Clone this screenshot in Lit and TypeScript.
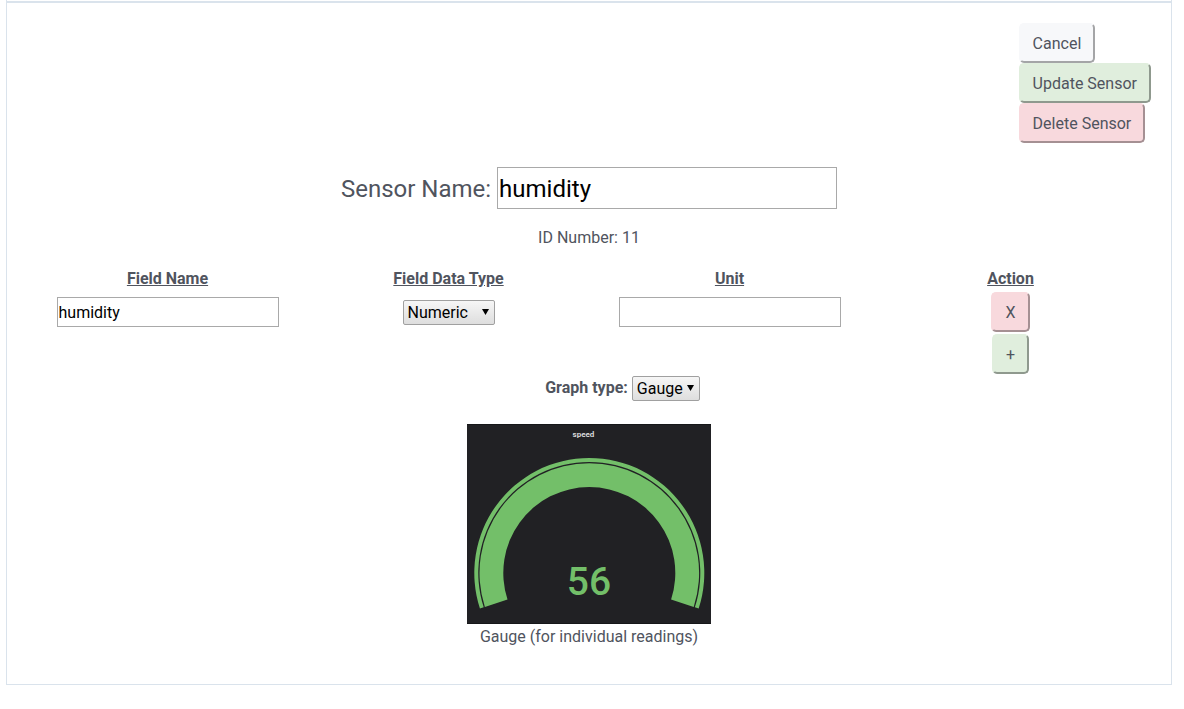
import { LitElement, html, svg, css } from "lit";
import { customElement, property, state } from "lit/decorators.js";

const toRadians = (degrees: number) => (degrees * Math.PI) / 180;

/** Ring segment that opens downwards, ending `dip` degrees below the horizontal. */
function arcBand(cx: number, cy: number, outer: number, inner: number, dip = 18) {
  const dx = Math.cos(toRadians(dip));
  const dy = Math.sin(toRadians(dip));
  return [
    `M${cx - outer * dx} ${cy + outer * dy}`,
    `A${outer} ${outer} 0 1 1 ${cx + outer * dx} ${cy + outer * dy}`,
    `L${cx + inner * dx} ${cy + inner * dy}`,
    `A${inner} ${inner} 0 1 0 ${cx - inner * dx} ${cy + inner * dy}`,
    "Z",
  ].join(" ");
}

@customElement("gauge-preview")
export class GaugePreview extends LitElement {
  @property() name = "";
  @property({ type: Number }) value = 0;

  static styles = css`
    :host {
      display: block;
    }
    .gauge {
      display: block;
      width: 244px;
      height: 200px;
      font-family: Roboto, "Liberation Sans", sans-serif;
      font-weight: 500;
      text-anchor: middle;
    }
    .back {
      fill: #212124;
    }
    .edge {
      fill: #161719;
    }
    .band,
    .value {
      fill: #73bf69;
    }
    .name {
      fill: #d8d9da;
      font-size: 8px;
      font-weight: 700;
    }
    .value {
      font-size: 39px;
    }
  `;

  render() {
    const bands = [
      [115, 111],
      [109.8, 86],
    ];
    return html`
      <svg class="gauge" viewBox="0 0 244 200" role="img" aria-label="Gauge">
        <rect class="back" width="244" height="200" />
        <rect class="edge" width="244" height="1" />
        <rect class="edge" y="199" width="244" height="1" />
        ${bands.map(([outer, inner]) => svg`<path class="band" d=${arcBand(122.3, 149, outer, inner)} />`)}
        <text class="name" x="116.5" y="12.5">${this.name}</text>
        <text class="value" x="122" y="171">${this.value}</text>
      </svg>
    `;
  }
}

@customElement("app-root")
export class AppRoot extends LitElement {
  @state() private fields = [{ name: "humidity", type: "Numeric", unit: "" }];

  static styles = css`
    :host {
      display: block;
      color: #50545e;
      font: 16px/24px Roboto, "Liberation Sans", sans-serif;
    }
    * {
      box-sizing: border-box;
    }
    .card {
      margin: 0 12px 0 6px;
      padding-top: 1px;
      border: 1px solid #dae3ec;
      border-top: 0;
      background: #fff;
    }
    .form {
      display: flex;
      flex-direction: column;
      align-items: center;
      padding: 20px 20px 35px;
      border-top: 2px solid #dae3ec;
    }
    .actions {
      display: flex;
      flex-direction: column;
      align-items: flex-start;
      align-self: flex-end;
      margin-bottom: 24px;
    }
    .btn {
      display: inline-block;
      margin: 0;
      padding: 7px 12px 5px;
      border: 2px solid;
      border-radius: 5px;
      color: inherit;
      font: inherit;
      vertical-align: top;
      cursor: pointer;
    }
    .plain {
      background: #f7f8fa;
      border-color: #f7f8fa #a4a5a7 #a4a5a7 #f7f8fa;
    }
    .good {
      background: #e0eedd;
      border-color: #e0eedd #8f998e #8f998e #e0eedd;
    }
    .bad {
      background: #f8d9dd;
      border-color: #f8d9dd #a59093 #a59093 #f8d9dd;
    }
    .title {
      display: flex;
      align-items: center;
      gap: 6px;
      font-size: 24px;
    }
    .title label {
      padding-top: 2px;
    }
    .text {
      margin: 0;
      padding: 1px;
      border: 1px solid #a9a9a9;
      border-radius: 0;
      background: #fff;
      color: #000;
      font: inherit;
      vertical-align: middle;
    }
    .text.large {
      width: 340px;
      height: 42px;
      padding: 2px 1px 0;
    }
    .text.small {
      width: 222px;
      height: 30px;
    }
    .id {
      margin: 17px 0 14px;
    }
    .fields {
      width: 100%;
      table-layout: fixed;
      border-spacing: 0 2px;
      text-align: center;
    }
    .fields th,
    .fields td {
      padding: 0;
    }
    .fields th {
      padding-top: 2px;
      font-weight: 700;
      line-height: 22px;
      text-decoration: underline;
    }
    .select {
      appearance: none;
      height: 25px;
      margin: 0;
      padding: 0 16px 0 4px;
      border: 1px solid #a0a0a0;
      border-radius: 2px;
      background:
        url("data:image/svg+xml,%3Csvg xmlns='http://www.w3.org/2000/svg' width='7' height='6'%3E%3Cpath d='M0 0h7L3.5 6z'/%3E%3C/svg%3E")
          no-repeat right 5px top 8px,
        linear-gradient(#f6f6f6, #dedede);
      color: #000;
      font: inherit;
      line-height: 23px;
      vertical-align: middle;
    }
    .type {
      width: 92px;
    }
    .kind {
      width: 68px;
    }
    .graph {
      display: flex;
      align-items: center;
      gap: 4px;
      height: 24px;
      margin-bottom: 24px;
      padding-left: 67px;
      font-weight: 700;
    }
    .graph .select {
      font-weight: 400;
    }
    .preview {
      margin: 0;
      text-align: center;
    }
    .preview gauge-preview {
      width: 244px;
    }
    .preview figcaption {
      padding-top: 1px;
    }
  `;

  private addField() {
    this.fields = [...this.fields, { name: "", type: "Numeric", unit: "" }];
  }

  private removeField(index: number) {
    this.fields = this.fields.filter((_, i) => i !== index);
  }

  render() {
    return html`
      <main class="card">
        <form class="form" @submit=${(e: Event) => e.preventDefault()}>
          <div class="actions">
            <button type="button" class="btn plain">Cancel</button>
            <button type="submit" class="btn good">Update Sensor</button>
            <button type="button" class="btn bad">Delete Sensor</button>
          </div>
          <div class="title">
            <label for="sensor">Sensor Name:</label>
            <input id="sensor" class="text large" type="text" value="humidity" />
          </div>
          <div class="id">ID Number: 11</div>
          <table class="fields">
            <thead>
              <tr>
                <th id="h-name" scope="col">Field Name</th>
                <th id="h-type" scope="col">Field Data Type</th>
                <th id="h-unit" scope="col">Unit</th>
                <th scope="col">Action</th>
              </tr>
            </thead>
            <tbody>
              ${this.fields.map(
                (field, i) => html`
                  <tr>
                    <td><input class="text small" type="text" aria-labelledby="h-name" .value=${field.name} /></td>
                    <td>
                      <select class="select type" aria-labelledby="h-type">
                        <option>${field.type}</option>
                      </select>
                    </td>
                    <td><input class="text small" type="text" aria-labelledby="h-unit" .value=${field.unit} /></td>
                    <td><button type="button" class="btn bad" @click=${() => this.removeField(i)}>X</button></td>
                  </tr>
                `,
              )}
              <tr>
                <td colspan="3"></td>
                <td><button type="button" class="btn good" @click=${this.addField}>+</button></td>
              </tr>
            </tbody>
          </table>
          <div class="graph">
            <label for="graph">Graph type:</label>
            <select id="graph" class="select kind">
              <option>Gauge</option>
            </select>
          </div>
          <figure class="preview">
            <gauge-preview name="speed" .value=${56}></gauge-preview>
            <figcaption>Gauge (for individual readings)</figcaption>
          </figure>
        </form>
      </main>
    `;
  }
}
